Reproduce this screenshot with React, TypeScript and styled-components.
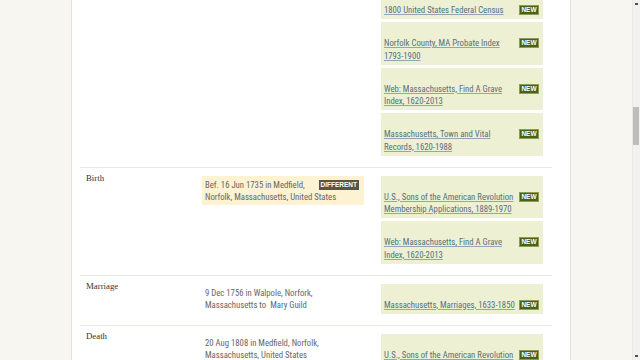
import React from "react";
import styled, { createGlobalStyle } from "styled-components";

type Source = { title: string };

type Fact = {
  label: string;
  value?: React.ReactNode;
  different?: boolean;
  sources: Source[];
};

const GlobalStyle = createGlobalStyle`
  html, body {
    margin: 0;
    padding: 0;
    overflow: hidden;
    background: #f7f6f1;
  }
`;

const Page = styled.div`
  display: flex;
  width: 640px;
  height: 360px;
  overflow: hidden;
  font-family: "Roboto Condensed", "Lato", sans-serif;
`;

const Main = styled.div`
  flex: 1;
  padding-left: 71px;
  overflow: hidden;
`;

const Panel = styled.div`
  width: 500px;
  min-height: 400px;
  margin-top: -20px;
  padding: 0 18px 0 8px;
  box-sizing: border-box;
  background: #ffffff;
  border-left: 1px solid #e3e0d7;
  border-right: 1px solid #e3e0d7;
`;

const Row = styled.div`
  display: grid;
  grid-template-columns: 122px 162px 17px 162px;
  align-items: start;
  padding: 8px 0 11px;
  border-top: 1px solid #ebe9e2;
`;

const Label = styled.div`
  grid-column: 1;
  padding-left: 6px;
  margin-top: -4px;
  font-family: "Liberation Serif", "DejaVu Serif", serif;
  font-size: 8.8px;
  line-height: 12px;
  color: #333333;
`;

const Value = styled.div<{ $highlight: boolean }>`
  grid-column: 2;
  padding: 3px 5px 2px 3px;
  background: ${(p) => (p.$highlight ? "#fdf3d2" : "transparent")};
  font-size: 8.7px;
  line-height: 12px;
  color: #666666;
`;

const Different = styled.span`
  float: right;
  margin-top: 1px;
  padding: 0 2px;
  height: 10px;
  line-height: 10px;
  background: #5b5443;
  color: #ffffff;
  font-family: "Liberation Sans", sans-serif;
  font-size: 6.5px;
  font-weight: 700;
`;

const Person = styled.span`
  color: #4d6b86;
`;

const Sources = styled.div`
  grid-column: 4;
  display: flex;
  flex-direction: column;
  gap: 3px;
`;

const SourceCard = styled.div`
  display: flex;
  align-items: flex-start;
  justify-content: space-between;
  gap: 4px;
  padding: 15px 4px 2.5px 3px;
  background: #eef0d3;
`;

const SourceLink = styled.a`
  max-width: 132px;
  font-size: 8.7px;
  line-height: 12.5px;
  color: #52707e;
  text-decoration: underline;
  text-decoration-color: #93a5ae;
`;

const NewBadge = styled.span`
  flex: none;
  margin-top: 1px;
  width: 20px;
  height: 10px;
  box-sizing: border-box;
  border: 1px solid #8c9b5c;
  background: #4a6214;
  color: #ffffff;
  font-family: "Liberation Sans", sans-serif;
  font-size: 6.5px;
  font-weight: 700;
  line-height: 8px;
  text-align: center;
`;

const Scrollbar = styled.div`
  width: 8px;
  display: flex;
  flex-direction: column;
  background: #f1f1f1;
  border-left: 1px solid #e8e8e8;
  box-sizing: border-box;
`;

const Arrow = styled.div`
  height: 8px;
  display: flex;
  align-items: center;
  justify-content: center;
  &::after {
    content: "";
    width: 3px;
    height: 2px;
    background: #505050;
  }
`;

const Track = styled.div`
  flex: 1;
  padding-top: 99px;
`;

const Thumb = styled.div`
  width: 6px;
  height: 38px;
  background: #bdbdbd;
`;

const facts: Fact[] = [
  {
    label: "",
    sources: [
      { title: "1800 United States Federal Census" },
      { title: "Norfolk County, MA Probate Index 1793-1900" },
      { title: "Web: Massachusetts, Find A Grave Index, 1620-2013" },
      { title: "Massachusetts, Town and Vital Records, 1620-1988" },
    ],
  },
  {
    label: "Birth",
    value: "Bef. 16 Jun 1735 in Medfield, Norfolk, Massachusetts, United States",
    different: true,
    sources: [
      { title: "U.S., Sons of the American Revolution Membership Applications, 1889-1970" },
      { title: "Web: Massachusetts, Find A Grave Index, 1620-2013" },
    ],
  },
  {
    label: "Marriage",
    value: (
      <>
        9 Dec 1756 in Walpole, Norfork, Massachusetts to&nbsp; <Person>Mary Guild</Person>
      </>
    ),
    sources: [{ title: "Massachusetts, Marriages, 1633-1850" }],
  },
  {
    label: "Death",
    value: "20 Aug 1808 in Medfield, Norfolk, Massachusetts, United States",
    sources: [{ title: "U.S., Sons of the American Revolution Membership Applications, 1889-1970" }],
  },
];

export default function App() {
  return (
    <>
      <GlobalStyle />
      <Page>
        <Main>
          <Panel>
            {facts.map((fact, i) => (
              <Row key={i}>
                <Label>{fact.label}</Label>
                <Value $highlight={!!fact.different}>
                  {fact.different && <Different>DIFFERENT</Different>}
                  {fact.value}
                </Value>
                <Sources>
                  {fact.sources.map((s, j) => (
                    <SourceCard key={j}>
                      <SourceLink href="#">{s.title}</SourceLink>
                      <NewBadge>NEW</NewBadge>
                    </SourceCard>
                  ))}
                </Sources>
              </Row>
            ))}
          </Panel>
        </Main>
        <Scrollbar>
          <Arrow />
          <Track>
            <Thumb />
          </Track>
          <Arrow />
        </Scrollbar>
      </Page>
    </>
  );
}
